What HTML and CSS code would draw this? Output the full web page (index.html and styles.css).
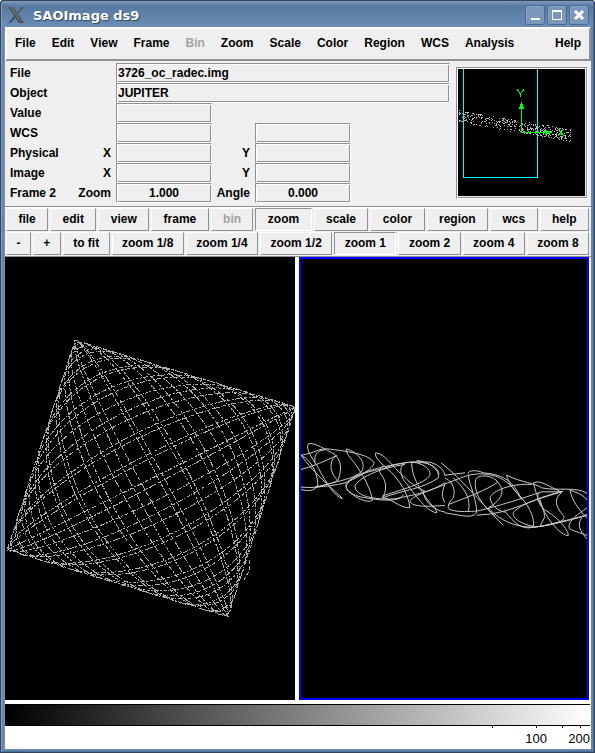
FILE: index.html
```html
<!DOCTYPE html>
<html lang="en">
<head>
<meta charset="utf-8">
<title>SAOImage ds9</title>
<link rel="stylesheet" href="styles.css">
</head>
<body>
<div class="window">
  <header class="titlebar">
    <svg class="logo" viewBox="0 0 16 16" aria-hidden="true">
      <path d="M0 0H5L16 16H11Z" fill="#454b51"/>
      <path d="M1 0H4L14 15H12Z" fill="#6b6b68"/>
      <path d="M14 0H16L10 7L9 6ZM7 8L8 10L3 16H0Z" fill="#49545e"/>
    </svg>
    <h1>SAOImage ds9</h1>
    <button class="wm" aria-label="Minimize"><svg viewBox="0 0 18 18"><path d="M5 13H14" stroke="#fff" stroke-width="2"/></svg></button>
    <button class="wm" aria-label="Maximize"><svg viewBox="0 0 18 18"><path d="M4 4H14V14H4ZM5 6V13H13V6Z" fill="#fff" fill-rule="evenodd"/></svg></button>
    <button class="wm" aria-label="Close"><svg viewBox="0 0 18 18"><path d="M5 5L13 13M13 5L5 13" stroke="#fff" stroke-width="3"/></svg></button>
  </header>

  <main class="client">
    <nav class="menubar">
      <button>File</button><button>Edit</button><button>View</button><button>Frame</button><button disabled>Bin</button><button>Zoom</button><button>Scale</button><button>Color</button><button>Region</button><button>WCS</button><button>Analysis</button><button class="help">Help</button>
    </nav>

    <section class="info">
      <div class="fields">
        <label class="name" for="file">File</label><input class="long" id="file" value="3726_oc_radec.img" readonly>
        <label class="name" for="object">Object</label><input class="long" id="object" value="JUPITER" readonly>
        <label class="name" for="value">Value</label><input class="first" id="value" readonly>
        <label class="name" for="wcs1">WCS</label><input class="first" id="wcs1" readonly><input class="second" aria-label="WCS second coordinate" readonly>
        <span class="name">Physical</span><label class="axis" for="px">X</label><input class="first" id="px" readonly><label class="axis2" for="py">Y</label><input class="second" id="py" readonly>
        <span class="name">Image</span><label class="axis" for="ix">X</label><input class="first" id="ix" readonly><label class="axis2" for="iy">Y</label><input class="second" id="iy" readonly>
        <span class="name">Frame 2</span><label class="axis" for="zm">Zoom</label><input class="first center" id="zm" value="1.000" readonly><label class="axis2" for="an">Angle</label><input class="second center" id="an" value="0.000" readonly>
      </div>
      <div class="panner">
        <svg viewBox="0 0 127 127" shape-rendering="crispEdges">
          <path id="specks" fill="#b8b8b8"/>
          <path d="M5.5 0V108.5H79.5V0" fill="none" stroke="#0ff"/>
          <g fill="none" stroke="#0f0">
            <path d="M63.5 36V63.5H92"/>
            <path d="M59.500 20V21L62.500 25V28M65.500 20V21L62.500 25"/>
            <path d="M100 60L106 67M106 60L100 67"/>
          </g>
          <path d="M63 33H64L66 40H61ZM94 63V64L87 66V61Z" fill="#0f0"/>
        </svg>
      </div>
    </section>

    <section class="toolbar">
      <div class="row"><button>file</button><button>edit</button><button>view</button><button>frame</button><button disabled>bin</button><button class="on">zoom</button><button>scale</button><button>color</button><button>region</button><button>wcs</button><button>help</button></div>
      <div class="row"><button>-</button><button>+</button><button>to fit</button><button>zoom 1/8</button><button>zoom 1/4</button><button>zoom 1/2</button><button class="on">zoom 1</button><button>zoom 2</button><button>zoom 4</button><button>zoom 8</button></div>
    </section>

    <section class="frames">
      <div class="frame">
        <svg viewBox="5 257 290 443" shape-rendering="crispEdges" fill="none" stroke="#acacac">
          <path id="lissajous" stroke-dasharray="5 1 2 2 3 1 1 2"/>
          <path d="M249 560V571L244 580" stroke-dasharray="4 2"/>
        </svg>
      </div>
      <div class="frame active">
        <svg viewBox="18 -510 858 1314" fill="none" stroke="#cacaca" stroke-width="3">
          <path d="M142 208C120 200 95 165 70 115C55 90 30 60 40 43C60 38 90 60 120 75C140 95 140 120 130 150C125 158 90 168 60 172M18 77C50 120 80 150 142 206M18 77C60 72 70 56 95 58C160 65 225 75 237 100C237 115 190 145 150 160C120 168 90 170 65 173C50 188 30 183 18 180M18 120C60 108 90 95 125 78C118 85 108 85 108 115C112 140 125 148 130 155M18 173C35 173 50 176 68 172M60 100C55 70 75 60 90 62M18 77C55 95 70 140 68 172"/>
          <path d="M155 58C150 75 175 90 195 125C215 155 230 190 232 213C215 220 190 210 160 185C145 170 160 155 185 140C220 120 270 110 330 100C380 92 430 105 432 135M155 58C190 70 215 100 200 125C180 150 100 160 60 175"/>
          <path d="M345 235C340 190 310 150 290 130C270 110 235 85 242 70C270 72 290 110 325 140C350 165 375 180 390 185M345 235C310 235 290 205 262 205C275 185 275 160 262 140C250 125 250 118 265 110M152 165C165 140 220 125 265 118C300 100 350 95 405 98C440 108 450 130 450 140M180 170C185 150 250 115 330 105M180 170C180 200 240 212 300 208C360 195 400 190 450 160M152 165C155 200 200 203 240 209S320 213 325 195M262 205C330 180 380 180 430 145C435 120 400 95 365 93"/>
          <path d="M350 98C350 140 370 170 390 200C405 225 425 235 425 250C390 245 350 180 325 150C310 120 320 105 330 102M405 130C410 160 300 185 262 200M405 130C400 110 370 98 350 98M450 165C400 185 350 200 345 215C350 235 410 230 450 228M385 185C385 210 410 240 450 248M450 165C440 185 440 205 450 220M438 100L450 110"/>
          <g transform="translate(450 0)">
            <path d="M0 110C50 150 90 200 175 288M0 137L60 130M0 163C40 150 80 125 130 135C160 140 190 150 230 210M70 135C65 122 95 120 115 130C170 135 200 150 225 200M0 145C30 160 30 190 25 205C10 220 5 235 15 240C40 250 80 245 95 245M25 145C50 170 80 200 70 245M70 140C75 170 95 210 95 250C80 270 40 255 0 250"/>
            <path d="M92 150C85 190 110 225 150 260M92 150C100 130 150 140 158 158C130 180 50 210 10 225M158 158C180 180 175 210 130 235M130 235C170 280 230 300 290 290C350 275 400 265 426 255M185 137C190 165 215 190 230 205C255 235 270 270 265 290C230 285 200 265 205 250C220 225 290 205 350 187M185 137C230 160 270 160 290 175C330 185 400 170 426 192"/>
            <path d="M265 160C285 150 310 170 350 188M180 245C210 285 230 295 250 295C320 288 380 270 426 258M265 160C275 200 290 240 320 280C340 305 360 320 370 318C370 300 340 265 298 240C280 225 270 200 285 187M350 188C325 210 335 230 345 245S360 260 355 270C340 285 290 290 250 295"/>
            <path d="M135 205C140 185 200 160 260 165M135 205C140 230 160 245 180 248M95 245C180 225 250 200 290 187H350M375 182C380 210 400 240 426 265M375 182C400 190 420 200 426 212M426 235C400 255 370 270 372 295C380 305 410 310 426 318M285 210C290 230 300 245 298 265L285 290M410 265C395 285 405 305 426 328M95 257C200 255 260 205 355 185"/>
          </g>
        </svg>
      </div>
    </section>

    <section class="colorbar">
      <div class="ramp"></div>
      <svg class="scale" shape-rendering="crispEdges">
        <g stroke="#000"><line x1="83.3%" x2="83.3%" y2="2"/><line x1="90.9%" x2="90.9%" y2="2"/><line x1="95.3%" x2="95.3%" y2="2"/><line x1="98.3%" x2="98.3%" y2="2"/></g>
        <text x="90.8%" y="17" text-anchor="middle">100</text>
        <text x="100%" y="17" text-anchor="end">200</text>
      </svg>
    </section>
  </main>
</div>
<script src="plot.js"></script>
</body>
</html>
```
FILE: styles.css
```css
* { box-sizing: border-box; }

body {
  margin: 0;
  background: #fff;
  color: #000;
  font: bold 12px/16px "Liberation Sans", Arial, sans-serif;
}

button, input {
  margin: 0;
  font: inherit;
  color: inherit;
  border-radius: 0;
}

svg { display: block; }

.window {
  display: flex;
  flex-direction: column;
  min-height: 100vh;
  padding: 0 4px 4px;
  background: #6486ae;
  border-radius: 4px 4px 0 0;
  box-shadow: inset 1px 1px #33435a, inset -1px -1px #33435a, inset 2px 2px #84a0c2, inset -2px -2px #4a6c94;
}

.titlebar {
  display: flex;
  align-items: center;
  gap: 2px;
  height: 27px;
  margin: 0 -2px;
  padding: 2px 4px 0 6px;
  background: linear-gradient(#7c9bc0, #587aa0 20%, #6a8eb8);
  border-top: 1px solid #33435a;
}

.logo { width: 16px; height: 16px; }

.titlebar h1 {
  flex: 1;
  margin: 2px 0 0 7px;
  color: #fff;
  font: bold 13px/16px "DejaVu Sans", sans-serif;
  text-shadow: 1px 1px 1px #2e4560;
}

.wm {
  width: 20px;
  height: 20px;
  padding: 0;
  border: 1px solid #4c6b90;
  border-radius: 3px;
  background: #7a97b9;
  box-shadow: inset 1px 1px #8ca6c4;
}

.wm svg { width: 18px; height: 18px; }

.client {
  flex: 1;
  display: flex;
  flex-direction: column;
  border-left: 1px solid #909090;
  background: #efefef;
}

.menubar {
  display: flex;
  align-items: center;
  gap: 16px;
  height: 34px;
  padding: 0 8px 2px;
  border: 2px solid #fff;
  border-right-color: #909090;
  border-bottom-color: #909090;
}

.menubar button {
  padding: 0;
  border: 0;
  background: none;
}

.menubar .help { margin-left: auto; }

button:disabled { color: #a3a3a3; }

.info {
  display: flex;
  gap: 6px;
  padding: 2px 3px 3px 5px;
}

.fields {
  flex: 1;
  display: grid;
  grid-template-columns: 58px 43px 5px 96px 38px 5px 96px 1fr;
  grid-auto-rows: 20px;
  align-items: center;
}

.name { grid-column: 1; }
.axis { grid-column: 2; text-align: right; }
.axis2 { grid-column: 5; text-align: right; }
.long { grid-column: 4 / -1; }
.first { grid-column: 4; }
.second { grid-column: 7; }

.fields input, .panner {
  border: 1px solid;
  border-color: #909090 #fff #fff #909090;
  box-shadow: inset 1px 1px #fff, inset -1px -1px #909090;
}

.fields input {
  width: 100%;
  min-width: 0;
  height: 20px;
  padding: 0 1px;
  background: #efefef;
}

.fields .center { text-align: center; }

.panner {
  width: 132px;
  height: 132px;
  margin-top: 4px;
  padding: 1px 2px 2px 1px;
}

.panner svg { width: 127px; height: 127px; background: #000; }

.toolbar {
  display: grid;
  gap: 1px;
  padding: 1px 2px 1px 1px;
  border-top: 1px solid #909090;
  border-bottom: 1px solid #909090;
  box-shadow: inset 0 1px #fff;
}

.row { display: flex; gap: 2px; }

.row button {
  flex: 1 1 auto;
  height: 23px;
  padding: 0 0 1px;
  background: #efefef;
  border: 1px solid;
  border-color: #fff #909090 #909090 #fff;
}

.row .on { border-color: #909090 #fff #fff #909090; }

.frames {
  flex: 1;
  display: grid;
  grid-template-columns: 1fr 1fr;
  gap: 4px;
  min-height: 443px;
  padding-right: 2px;
  background: #fff;
}

.frame {
  display: flex;
  min-width: 0;
  background: #000;
}

.frame svg { flex: 1; width: 100%; height: auto; }

.active { border: 2px solid #00f; }

.colorbar {
  height: 49px;
  padding: 4px 1px 0 0;
  background: #fff;
}

.ramp {
  height: 22px;
  border: solid #000;
  border-width: 1px 0;
  background: linear-gradient(90deg, #000, #fff);
}

.scale { width: 100%; height: 22px; }

.scale text { font: 13px "Liberation Sans", sans-serif; }
```
FILE: plot.js
```js
// Slowly precessing ellipses inside a rotated square.
const n = 41;
const steps = 9000;
let d = "";
for (let i = 0; i <= steps; i++) {
  const t = Math.PI * i / steps;
  const drift = 0.05 * Math.sin(23 * t);
  const u = Math.cos(n * t) / 2;
  const v = Math.cos((n + 1) * t + drift) / 2;
  const x = 151.5 + 221 * u - 68 * v;
  const y = 478.5 + 67 * u + 210 * v;
  d += (i ? "L" : "M") + x.toFixed(1) + " " + y.toFixed(1);
}
document.getElementById("lissajous").setAttribute("d", d);

// Thinned image pixels in the panner.
let seed = 7;
const random = () => (seed = seed * 16807 % 2147483647) / 2147483647;
let s = "";
for (let i = 0; i < 400; i++) {
  const x = Math.floor(random() * 112) + 1;
  const y = Math.round(47 + x * 0.17 + (random() - 0.5) * 12);
  s += "M" + x + " " + y + "h1v1h-1z";
}
document.getElementById("specks").setAttribute("d", s);
```
